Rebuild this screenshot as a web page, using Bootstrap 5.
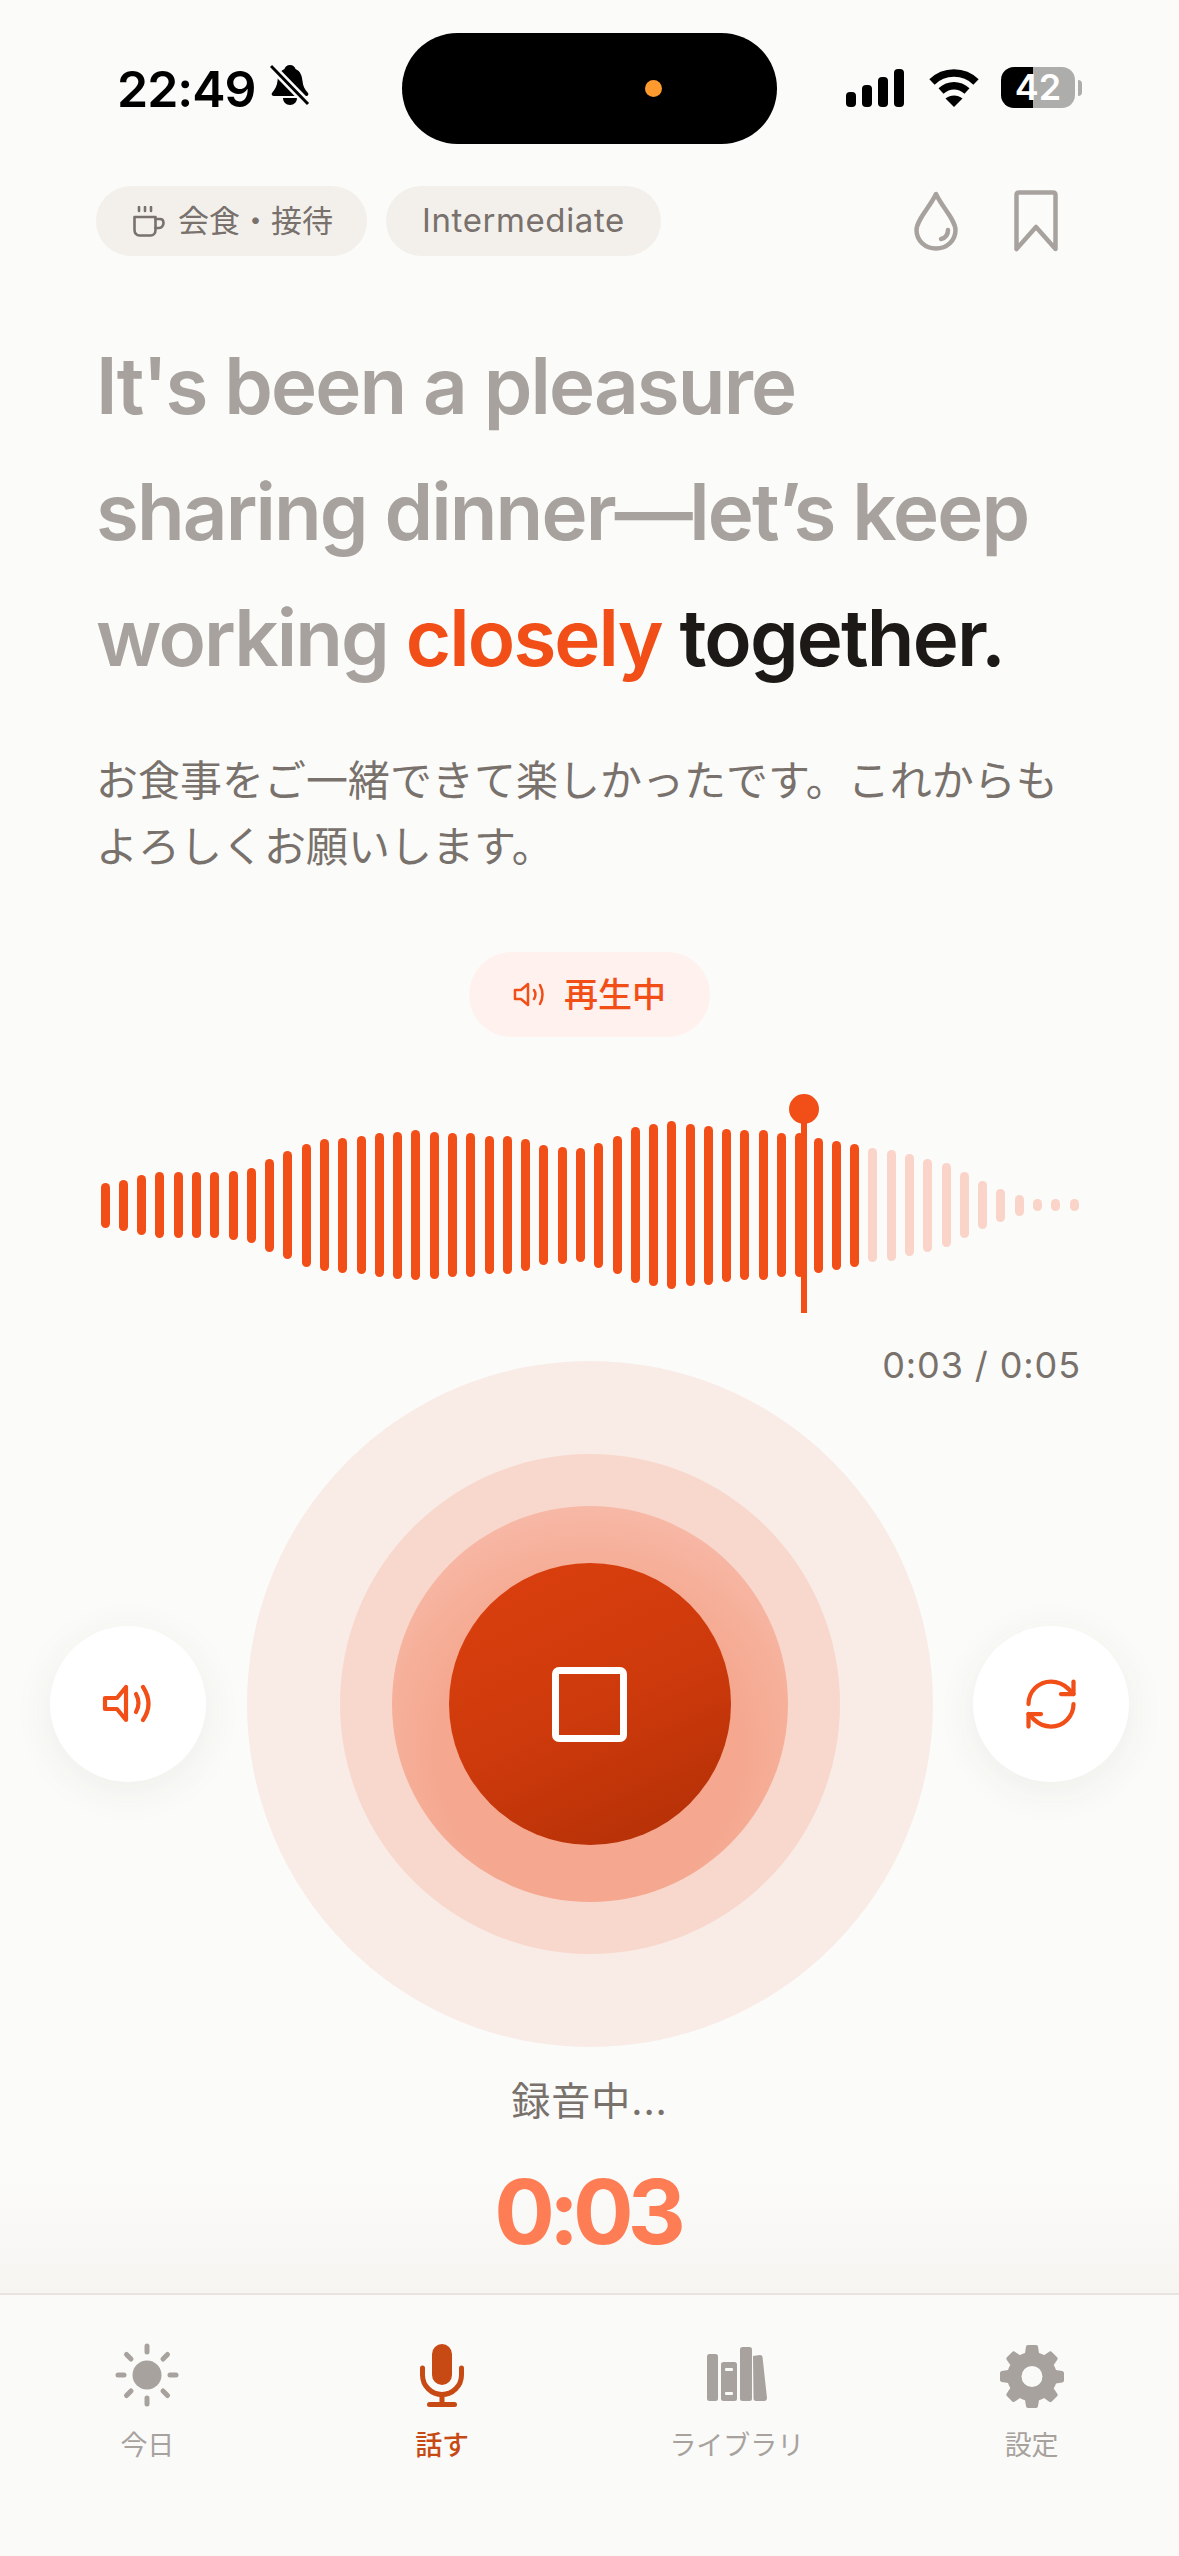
<!DOCTYPE html>
<html lang="ja">
<head>
    <meta charset="UTF-8">
    <meta name="viewport" content="width=device-width, initial-scale=1.0">
    <link href="https://cdn.jsdelivr.net/npm/bootstrap@5.3.3/dist/css/bootstrap.min.css" rel="stylesheet">
    <title>話す</title>
    <style>
        body { background: #fbfbf9; font-family: Inter, "Noto Sans CJK JP", sans-serif; color: #78716c; }
        .screen { width: 1179px; height: 2556px; overflow: hidden; }

        .status-bar { display: grid; grid-template-columns: 1fr 375px 1fr; padding-top: 33px; height: 144px; }
        .status-left { padding: 31px 0 0 117px; gap: 14px; color: #000; font-size: 50px; line-height: 50px; font-weight: 600; letter-spacing: -1px; }
        .island { height: 111px; border-radius: 56px; background: #000; padding-left: 243px; }
        .island-dot { width: 17px; height: 17px; border-radius: 50%; background: #ff9a2e; }
        .status-right { padding: 36px 0 0 69px; }
        .battery { flex: 0 0 74px; height: 41px; margin: -2px 0 0 22px; border-radius: 13px; background: linear-gradient(90deg, #000 43%, #adadab 43%); color: #fff; font-size: 36px; line-height: 41px; font-weight: 600; text-align: center; }
        .battery-nub { flex: 0 0 4px; height: 16px; margin: 11px 0 0 3px; border-radius: 0 4px 4px 0; background: #adadab; }

        .top-row { margin-top: 42px; padding: 0 96px; height: 70px; }
        .tag-pill { height: 70px; padding: 0 34px 0 37px; border-radius: 35px; background: #f3f0ec; font-size: 31px; gap: 13px; margin-right: 19px; }
        .tag-latin { font-size: 33px; padding: 0 36px; letter-spacing: .6px; }
        .top-icons { margin-left: auto; gap: 56px; padding-right: 25px; }

        .phrase { margin: 67px 0 0; padding: 0 96px; font-size: 78px; line-height: 126px; font-weight: 600; letter-spacing: -1.9px; color: #a8a29e; white-space: nowrap; }
        .phrase .hit { color: #f24e18; }
        .phrase .done { color: #1c1917; }
        .phrase .dash { letter-spacing: -3.5px; }
        .translation { margin: 47px 0 0; padding: 0 96px; font-size: 42px; line-height: 66px; }

        .playing-pill { height: 85px; width: 241px; margin: 72px auto 0; border-radius: 43px; background: #fff1ed; color: #f24e18; font-size: 34px; font-weight: 500; gap: 18px; }

        .wave { height: 180px; margin: 78px 96px 0; }
        .wave-slot { flex: 1 1 0; display: flex; justify-content: center; }
        .wave-bar { width: 9px; border-radius: 5px; background: #f24e18; }
        .wave-bar.rest { background: #fad4c8; }
        .playhead { position: absolute; left: 705px; top: -6px; width: 6px; height: 204px; background: #f24e18; }
        .playhead::before { content: ""; position: absolute; left: -12px; top: -15px; width: 30px; height: 30px; border-radius: 50%; background: #f24e18; }

        .clock { margin-top: 46px; padding: 0 98px; height: 48px; line-height: 48px; font-size: 36px; letter-spacing: .9px; text-align: right; position: relative; z-index: 1; }

        .record-stage { margin-top: -28px; padding: 0 50px; }
        .side-btn { width: 156px; height: 156px; border-radius: 50%; background: #fff; box-shadow: 0 8px 40px rgba(60, 50, 40, .07); }
        .ring { border-radius: 50%; }
        .ring-1 { width: 686px; height: 686px; background: #f9ebe6; }
        .ring-2 { width: 500px; height: 500px; background: #f8d8cd; }
        .ring-3 { width: 396px; height: 396px; background: radial-gradient(circle 245px at 50% 62%, #f5a78f 61%, #f6b09a 82%, #f7b8a6 100%); }
        .stop-btn { width: 282px; height: 282px; background: linear-gradient(155deg, #dc400e 0, #ce3a0c 50%, #b12f06 100%); }
        .stop-square { width: 75px; height: 75px; border: 7px solid #fff; border-radius: 7px; }

        .record-text { background: linear-gradient(180deg, rgba(246, 245, 242, 0) 50%, #f6f5f2 100%); height: 246px; padding-top: 24px; text-align: center; }
        .record-label { height: 60px; line-height: 60px; font-size: 39px; letter-spacing: 1px; }
        .record-time { margin-top: 26px; padding-right: 5px; height: 110px; line-height: 110px; font-size: 90px; font-weight: 700; letter-spacing: -6px; color: #ff7d55; }

        .tab-bar { border-top: 2px solid #e8e3de; background: #fafaf8; padding-top: 47px; flex: 1 1 auto; }
        .tab-item { flex: 1 1 0; text-align: center; font-size: 27px; color: #a8a29e; }
        .tab-item.active { color: #c74a15; font-weight: 500; }
        .tab-icon { height: 66px; margin-bottom: 18px; }
    </style>
</head>
<body>

    <div class="screen d-flex flex-column">

        <div class="status-bar">
            <div class="status-left d-flex align-items-start">
                22:49
                <svg width="40" height="42" viewBox="0 0 40 42">
                    <path d="M20 1c3 0 5 2 5.500 4 5 2 6.500 7 7 12 .5 5 2 8 5.500 12 1 1.500 0 3-1.500 3H4c-2 0-3-1.500-2-3 3-4 5-7 5.500-12 .5-5 2-10 7-12C15 3 17 1 20 1z"/>
                    <path d="M13 34h14c0 4-3 7-7 7s-7-3-7-7z"/>
                    <path d="M1 2l37 38" stroke="#fbfbf9" stroke-width="8"/>
                    <path d="M1 2l37 38" stroke="#000" stroke-width="3"/>
                </svg>
            </div>
            <div class="island d-flex align-items-center"><div class="island-dot"></div></div>
            <div class="status-right d-flex align-items-start">
                <svg class="flex-shrink-0" width="59" height="38" viewBox="0 0 59 38" fill="#000">
                    <rect x="0" y="23" width="10" height="15" rx="4"/>
                    <rect x="16" y="16" width="10" height="22" rx="4"/>
                    <rect x="32" y="8" width="10" height="30" rx="4"/>
                    <rect x="48" y="0" width="10" height="38" rx="4"/>
                </svg>
                <svg class="ms-4 flex-shrink-0" width="50" height="38" viewBox="0 0 50 38">
                    <path d="M3 13C15 1 35 1 47 13" fill="none" stroke="#000" stroke-width="7.500"/>
                    <path d="M12 22c8-7 18-7 26 0" fill="none" stroke="#000" stroke-width="7.500"/>
                    <path d="M25 38l-8.500-8.500c5-4 12-4 17 0z"/>
                </svg>
                <div class="battery">42</div>
                <div class="battery-nub"></div>
            </div>
        </div>

        <div class="top-row d-flex align-items-center">
            <div class="tag-pill d-flex align-items-center">
                <svg width="32" height="31" viewBox="0 0 32 31" fill="none" stroke="#78716c" stroke-width="2.600" stroke-linecap="round" stroke-linejoin="round">
                    <path d="M6 1v4M12 1v4M18 1v4"/>
                    <path d="M1.500 11h21v13c0 3-2 5.500-5 5.500h-11c-3 0-5-2.500-5-5.500z"/>
                    <path d="M22.500 13H27c2.500 0 3.500 2 3.500 4s-1.500 5-4.500 5h-3.500"/>
                </svg>
                会食・接待
            </div>
            <div class="tag-pill tag-latin d-flex align-items-center">Intermediate</div>
            <div class="top-icons d-flex align-items-center">
                <svg width="44" height="60" viewBox="0 0 44 60" fill="none" stroke="#a8a29e" stroke-width="4.500" stroke-linecap="round" stroke-linejoin="round">
                    <path d="M22 3C16 16 2.500 29 2.500 39c0 11 9 18.500 19.500 18.500S41.500 50 41.500 39C41.500 29 28 16 22 3z"/>
                    <path d="M34 39c0 5-3 8-7 9"/>
                </svg>
                <svg width="44" height="62" viewBox="0 0 44 62" fill="none" stroke="#a8a29e" stroke-width="4.500" stroke-linejoin="round">
                    <path d="M2.500 59V5c0-1.500 1-2.500 2.500-2.500h34c1.500 0 2.500 1 2.500 2.500v54L22 37z"/>
                </svg>
            </div>
        </div>

        <h1 class="phrase">It's been a pleasure<br>sharing dinner<span class="dash">—</span>let’s keep<br>working <span class="hit">closely</span> <span class="done">together.</span></h1>

        <p class="translation">お食事をご一緒できて楽しかったです。これからもよろしくお願いします。</p>

        <div class="playing-pill d-flex align-items-center justify-content-center">
            <svg width="33" height="25" viewBox="0 0 33 25" fill="none" stroke="#f24e18" stroke-width="2.500" stroke-linecap="round" stroke-linejoin="round">
                <path d="M2 8h6l7-6v21l-7-6H2z"/>
                <path d="M21 8q3 4.500 0 9"/>
                <path d="M27 3q5 9.500 0 19"/>
            </svg>
            再生中
        </div>

        <div class="wave d-flex align-items-center position-relative" id="wave">
            <div class="playhead"></div>
        </div>

        <div class="clock">0:03 / 0:05</div>

        <div class="record-stage d-flex align-items-center justify-content-between">
            <div class="side-btn d-flex align-items-center justify-content-center">
                <svg width="56" height="42" viewBox="20 44 56 42" fill="none" stroke="#f24e18" stroke-width="4.200" stroke-linecap="round" stroke-linejoin="round">
                    <path d="M25 59h12l9-11v33l-9-11H25z"/>
                    <path d="M56 55q5 9 0 18"/>
                    <path d="M63 48q11 17 0 33"/>
                </svg>
            </div>
            <div class="ring ring-1 d-flex align-items-center justify-content-center">
                <div class="ring ring-2 d-flex align-items-center justify-content-center">
                    <div class="ring ring-3 d-flex align-items-center justify-content-center">
                        <div class="ring stop-btn d-flex align-items-center justify-content-center">
                            <div class="stop-square"></div>
                        </div>
                    </div>
                </div>
            </div>
            <div class="side-btn d-flex align-items-center justify-content-center">
                <svg width="60" height="60" viewBox="0 0 24 24" fill="none" stroke="#f24e18" stroke-width="1.700" stroke-linecap="round" stroke-linejoin="round">
                    <path d="M3 12a9 9 0 0 1 9-9 9.750 9.750 0 0 1 6.740 2.740L21 8"/>
                    <path d="M21 3v5h-5"/>
                    <path d="M21 12a9 9 0 0 1-9 9 9.750 9.750 0 0 1-6.740-2.740L3 16"/>
                    <path d="M8 16H3v5"/>
                </svg>
            </div>
        </div>

        <div class="record-text">
            <div class="record-label">録音中...</div>
            <div class="record-time">0:03</div>
        </div>

        <div class="tab-bar d-flex">
            <div class="tab-item">
                <div class="tab-icon">
                    <svg width="66" height="66" viewBox="0 0 66 66" fill="#a8a29e">
                        <circle cx="33" cy="33" r="14.500"/>
                        <g stroke="#a8a29e" stroke-width="5" stroke-linecap="round">
                            <path d="M33 4v6M33 56v6M4 33h6M56 33h6M12.500 12.500l4.500 4.500M49 49l4.500 4.500M12.500 53.500L17 49M49 17l4.500-4.500"/>
                        </g>
                    </svg>
                </div>
                今日
            </div>
            <div class="tab-item active">
                <div class="tab-icon">
                    <svg width="66" height="66" viewBox="0 0 66 66">
                        <rect x="23" y="2" width="20" height="41" rx="10" fill="#c74a15"/>
                        <path d="M13.500 26v7c0 11 9 19.500 19.500 19.500S52.500 44 52.500 33v-7" fill="none" stroke="#c74a15" stroke-width="5" stroke-linecap="round"/>
                        <path d="M33 52v11" stroke="#c74a15" stroke-width="5"/>
                        <rect x="18" y="60" width="30" height="5" rx="2.500" fill="#c74a15"/>
                    </svg>
                </div>
                話す
            </div>
            <div class="tab-item">
                <div class="tab-icon">
                    <svg width="66" height="66" viewBox="0 0 66 66" fill="#a8a29e">
                        <rect x="3" y="12" width="11" height="47" rx="2.500"/>
                        <rect x="17" y="20" width="16" height="39" rx="2.500"/>
                        <rect x="21" y="26" width="8" height="3" rx="1" fill="#fafaf8"/>
                        <rect x="21" y="50" width="8" height="3" rx="1" fill="#fafaf8"/>
                        <rect x="36" y="5" width="12" height="54" rx="2.500"/>
                        <path d="M49 14l7-1c1.500 0 2.500 1 2.500 2L63 56c0 1.500-1 3-2.500 3H52c-1.500 0-2.500-1-2.500-2.500z"/>
                    </svg>
                </div>
                ライブラリ
            </div>
            <div class="tab-item">
                <div class="tab-icon">
                    <svg width="66" height="66" viewBox="0 0 66 66">
                        <path fill="#a8a29e" fill-rule="evenodd" d="M29 3h8c1 0 2 .7 2 1.800l1 6.200c2 .6 3.500 1.300 5 2.300l5.200-3.600c.8-.5 1.900-.5 2.600.2l5.300 5.300c.7.700.7 1.800.2 2.600L54.700 23c1 1.500 1.700 3.200 2.300 5l6.200 1c1 .2 1.800 1 1.800 2v7.500c0 1-.8 1.800-1.800 2l-6.200 1c-.6 1.800-1.300 3.500-2.300 5l3.600 5.200c.5.800.5 1.900-.2 2.600l-5.300 5.300c-.7.700-1.800.7-2.600.2L45 56c-1.500 1-3 1.700-5 2.300L39 64c-.1 1-1 2-2 2h-8c-1 0-1.900-1-2-2l-1-5.700c-2-.6-3.500-1.300-5-2.300l-5.200 3.600c-.8.5-1.900.5-2.600-.2l-5.300-5.300c-.7-.7-.7-1.800-.2-2.600L11.300 46c-1-1.500-1.700-3.200-2.300-5l-6.200-1C1.800 39.800 1 39 1 38v-7c0-1 .8-1.800 1.800-2L9 28c.6-1.800 1.300-3.500 2.300-5l-3.600-5.200c-.5-.8-.5-1.900.2-2.600l5.300-5.300c.7-.7 1.800-.7 2.600-.2L21 13.300c1.500-1 3-1.700 5-2.300l1-6.200C27.100 3.700 28 3 29 3zM33 24a10.500 10.500 0 1 0 0 21 10.500 10.500 0 0 0 0-21z"/>
                    </svg>
                </div>
                設定
            </div>
        </div>

    </div>

    <script src="https://cdn.jsdelivr.net/npm/bootstrap@5.3.3/dist/js/bootstrap.bundle.min.js"></script>
    <script>
        heights = [45,51,60,66,66,66,66,69,75,93,108,123,132,135,138,144,147,150,147,144,144,138,138,132,120,117,114,125,138,156,162,168,162,159,153,150,150,144,144,135,129,123,114,111,102,93,84,66,48,33,21,12,12,12];
        wave = document.getElementById("wave");
        for (let i=0; i<heights.length; i++) {
            slot = document.createElement("div");
            slot.className = "wave-slot";
            bar = document.createElement("div");
            bar.className = i<42 ? "wave-bar" : "wave-bar rest";
            bar.style.height = heights[i]+"px";
            slot.appendChild(bar);
            wave.appendChild(slot);
        }
    </script>
</body>
</html>
